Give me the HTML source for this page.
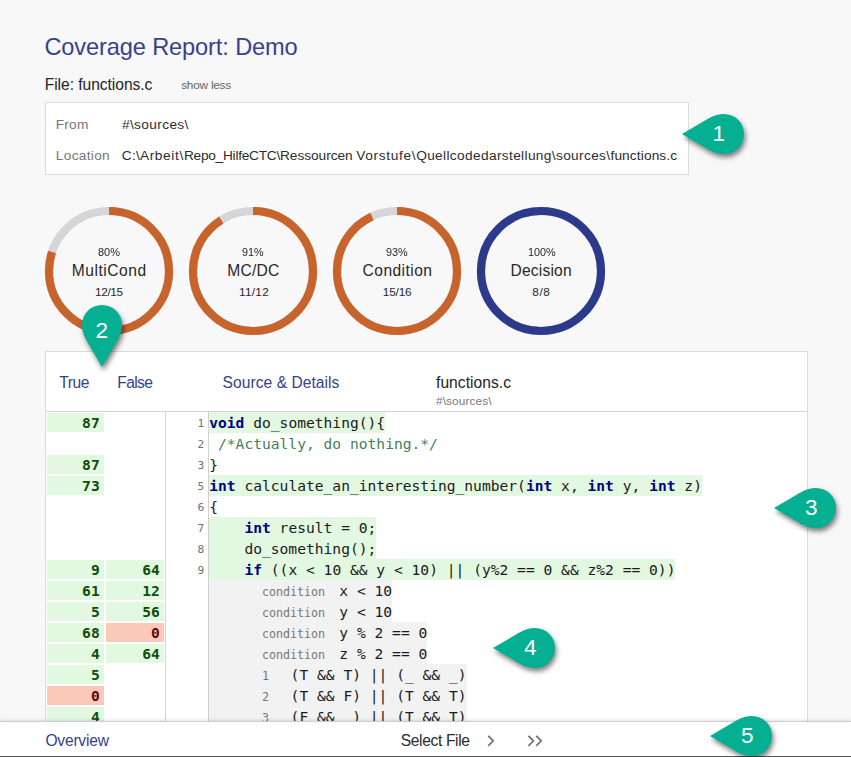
<!DOCTYPE html>
<html><head><meta charset="utf-8"><title>Coverage Report: Demo</title>
<style>
html,body{margin:0;padding:0;}
body{width:851px;height:757px;overflow:hidden;background:#f8f8f8;position:relative;font-family:"Liberation Sans", sans-serif;color:#111;}
.a{position:absolute;white-space:pre;line-height:1;}
.s{font-family:"Liberation Sans", sans-serif;}
.m{font-family:"DejaVu Sans Mono", "Liberation Mono", monospace;}
.box{position:absolute;left:45px;top:102px;width:642px;height:71px;background:#fff;border:1px solid #dcdcdc;}
.tbl{position:absolute;left:45px;top:351px;width:761px;height:420px;background:#fff;border:1px solid #dcdcdc;}
.hl{position:absolute;background:#e3f8e1;}
.gr{position:absolute;background:#f2f2f2;}
.cell{position:absolute;height:19px;}
.g{background:#e3f8e1;}
.r{background:#fcc9b9;}
.kw{font-weight:bold;color:#000080;}
.cm{color:#3f7f5f;}
.footer{position:absolute;left:0;top:721px;width:851px;height:35px;background:#fff;border-top:1px solid #cdcdcd;box-shadow:0 -1px 3px rgba(0,0,0,0.12);}
.bottom{position:absolute;left:0;top:756px;width:851px;height:1px;background:#555;}
</style></head>
<body>
<div class="a s" style="left:44.40px;top:36.20px;font-size:23.6px;color:#35428d;letter-spacing:-0.120px;">Coverage Report: Demo</div>
<div class="a s" style="left:44.70px;top:76.70px;font-size:15.6px;color:#242424;letter-spacing:-0.040px;">File: functions.c</div>
<div class="a s" style="left:181.20px;top:80.10px;font-size:11.8px;color:#666;letter-spacing:-0.225px;">show less</div>
<div class="box"></div>
<div class="a s" style="left:55.80px;top:118.35px;font-size:13.7px;color:#777;letter-spacing:0.190px;">From</div>
<div class="a s" style="left:121.90px;top:118.35px;font-size:13.7px;color:#2c2c2c;letter-spacing:0.373px;">#\sources\</div>
<div class="a s" style="left:55.80px;top:148.55px;font-size:13.7px;color:#777;letter-spacing:0.309px;">Location</div>
<div class="a s" style="left:121.80px;top:148.55px;font-size:13.7px;color:#2c2c2c"><span style="letter-spacing:0.203px">C:\</span><span style="letter-spacing:0.634px">Arbeit\</span><span style="letter-spacing:-0.253px">Repo_HilfeCTC\</span><span style="letter-spacing:-0.049px">Ressourcen </span><span style="letter-spacing:0.642px">Vorstufe\</span><span style="letter-spacing:0.353px">Quellcodedarstellung\</span><span style="letter-spacing:0.346px">sources\</span><span style="letter-spacing:0.121px">functions.c</span></div>
<svg class="a" style="left:39px;top:201px" width="140" height="140" viewBox="-70 -70 140 140"><circle r="60.0" fill="none" stroke="#d6d6d6" stroke-width="8.2"/><circle r="60.0" fill="none" stroke="#c8632b" stroke-width="8.2" stroke-dasharray="301.59 376.99" transform="rotate(-90)"/></svg>
<svg class="a" style="left:183px;top:201px" width="140" height="140" viewBox="-70 -70 140 140"><circle r="60.0" fill="none" stroke="#d6d6d6" stroke-width="8.2"/><circle r="60.0" fill="none" stroke="#c8632b" stroke-width="8.2" stroke-dasharray="343.06 376.99" transform="rotate(-90)"/></svg>
<svg class="a" style="left:327px;top:201px" width="140" height="140" viewBox="-70 -70 140 140"><circle r="60.0" fill="none" stroke="#d6d6d6" stroke-width="8.2"/><circle r="60.0" fill="none" stroke="#c8632b" stroke-width="8.2" stroke-dasharray="350.60 376.99" transform="rotate(-90)"/></svg>
<svg class="a" style="left:471px;top:201px" width="140" height="140" viewBox="-70 -70 140 140"><circle r="60.0" fill="none" stroke="#d6d6d6" stroke-width="8.2"/><circle r="60.0" fill="none" stroke="#2c3a8c" stroke-width="8.2" stroke-dasharray="376.99 376.99" transform="rotate(-90)"/></svg>
<div class="a s" style="left:97.70px;top:247.20px;font-size:11.8px;color:#282828;transform:scaleX(0.9286);transform-origin:0 0;">80%</div>
<div class="a s" style="left:71.70px;top:262.90px;font-size:15.6px;color:#282828;letter-spacing:0.521px;">MultiCond</div>
<div class="a s" style="left:94.90px;top:287.20px;font-size:11.8px;color:#282828;letter-spacing:-0.315px;">12/15</div>
<div class="a s" style="left:242.30px;top:247.20px;font-size:11.8px;color:#282828;transform:scaleX(0.9162);transform-origin:0 0;">91%</div>
<div class="a s" style="left:227.20px;top:262.90px;font-size:15.6px;color:#282828;letter-spacing:0.239px;">MC/DC</div>
<div class="a s" style="left:239.00px;top:287.20px;font-size:11.8px;color:#282828;letter-spacing:0.279px;">11/12</div>
<div class="a s" style="left:386.00px;top:247.20px;font-size:11.8px;color:#282828;transform:scaleX(0.9203);transform-origin:0 0;">93%</div>
<div class="a s" style="left:362.60px;top:262.90px;font-size:15.6px;color:#282828;letter-spacing:0.436px;">Condition</div>
<div class="a s" style="left:382.80px;top:287.20px;font-size:11.8px;color:#282828;letter-spacing:-0.190px;">15/16</div>
<div class="a s" style="left:527.60px;top:247.20px;font-size:11.8px;color:#282828;transform:scaleX(0.9191);transform-origin:0 0;">100%</div>
<div class="a s" style="left:510.60px;top:262.90px;font-size:15.6px;color:#282828;letter-spacing:0.167px;">Decision</div>
<div class="a s" style="left:532.30px;top:287.20px;font-size:11.8px;color:#282828;letter-spacing:0.531px;">8/8</div>
<div class="tbl"></div>
<div class="a s" style="left:59.20px;top:375.10px;font-size:15.6px;color:#35428d;letter-spacing:-0.437px;">True</div>
<div class="a s" style="left:117.30px;top:375.10px;font-size:15.6px;color:#35428d;letter-spacing:-0.615px;">False</div>
<div class="a s" style="left:222.60px;top:375.10px;font-size:15.6px;color:#35428d;letter-spacing:0.044px;">Source &amp; Details</div>
<div class="a s" style="left:436.00px;top:375.10px;font-size:15.6px;color:#242424;letter-spacing:0.045px;">functions.c</div>
<div class="a s" style="left:436.00px;top:396.10px;font-size:11.8px;color:#777;letter-spacing:0.117px;">#\sources\</div>
<div style="position:absolute;left:46px;top:411px;width:761px;height:1px;background:#d4d4d4"></div>
<div style="position:absolute;left:165px;top:412px;width:1px;height:320px;background:#d4d4d4"></div>
<div style="position:absolute;left:208px;top:412px;width:1px;height:320px;background:#d0d0d0"></div>
<div class="cell g" style="left:47px;top:413px;width:57px"></div>
<div class="a m" style="left:82.11px;top:416.20px;font-size:14.6px;color:#0e4d08;letter-spacing:0.011px;font-weight:bold;">87</div>
<div class="a m" style="left:197.56px;top:418.20px;font-size:11.2px;color:#707070;letter-spacing:0.000px;">1</div>
<div class="hl" style="left:209px;top:412px;width:175.9px;height:21px"></div>
<div class="a m" style="left:209.20px;top:416.20px;font-size:14.6px;color:#1a1a1a;letter-spacing:0.011px;"><span class="kw">void</span> do_something(){</div>
<div class="a m" style="left:197.56px;top:439.20px;font-size:11.2px;color:#707070;letter-spacing:0.000px;">2</div>
<div class="a m" style="left:209.20px;top:437.20px;font-size:14.6px;color:#1a1a1a;letter-spacing:0.011px;"><span class="cm"> /*Actually, do nothing.*/</span></div>
<div class="cell g" style="left:47px;top:455px;width:57px"></div>
<div class="a m" style="left:82.11px;top:458.20px;font-size:14.6px;color:#0e4d08;letter-spacing:0.011px;font-weight:bold;">87</div>
<div class="a m" style="left:197.56px;top:460.20px;font-size:11.2px;color:#707070;letter-spacing:0.000px;">3</div>
<div class="a m" style="left:209.20px;top:458.20px;font-size:14.6px;color:#1a1a1a;letter-spacing:0.011px;">}</div>
<div class="cell g" style="left:47px;top:476px;width:57px"></div>
<div class="a m" style="left:82.11px;top:479.20px;font-size:14.6px;color:#0e4d08;letter-spacing:0.011px;font-weight:bold;">73</div>
<div class="a m" style="left:197.56px;top:481.20px;font-size:11.2px;color:#707070;letter-spacing:0.000px;">5</div>
<div class="hl" style="left:209px;top:475px;width:492.6px;height:21px"></div>
<div class="a m" style="left:209.20px;top:479.20px;font-size:14.6px;color:#1a1a1a;letter-spacing:0.011px;"><span class="kw">int</span> calculate_an_interesting_number(<span class="kw">int</span> x, <span class="kw">int</span> y, <span class="kw">int</span> z)</div>
<div class="a m" style="left:197.56px;top:502.20px;font-size:11.2px;color:#707070;letter-spacing:0.000px;">6</div>
<div class="a m" style="left:209.20px;top:500.20px;font-size:14.6px;color:#1a1a1a;letter-spacing:0.011px;">{</div>
<div class="a m" style="left:197.56px;top:523.20px;font-size:11.2px;color:#707070;letter-spacing:0.000px;">7</div>
<div class="hl" style="left:209px;top:517px;width:167.1px;height:21px"></div>
<div class="a m" style="left:209.20px;top:521.20px;font-size:14.6px;color:#1a1a1a;letter-spacing:0.011px;">    <span class="kw">int</span> result = 0;</div>
<div class="a m" style="left:197.56px;top:544.20px;font-size:11.2px;color:#707070;letter-spacing:0.000px;">8</div>
<div class="hl" style="left:209px;top:538px;width:167.1px;height:21px"></div>
<div class="a m" style="left:209.20px;top:542.20px;font-size:14.6px;color:#1a1a1a;letter-spacing:0.011px;">    do_something();</div>
<div class="cell g" style="left:47px;top:560px;width:57px"></div>
<div class="a m" style="left:90.90px;top:563.20px;font-size:14.6px;color:#0e4d08;letter-spacing:0.011px;font-weight:bold;">9</div>
<div class="cell g" style="left:106px;top:560px;width:58px"></div>
<div class="a m" style="left:142.31px;top:563.20px;font-size:14.6px;color:#0e4d08;letter-spacing:0.011px;font-weight:bold;">64</div>
<div class="a m" style="left:197.56px;top:565.20px;font-size:11.2px;color:#707070;letter-spacing:0.000px;">9</div>
<div class="hl" style="left:209px;top:559px;width:466.2px;height:21px"></div>
<div class="a m" style="left:209.20px;top:563.20px;font-size:14.6px;color:#1a1a1a;letter-spacing:0.011px;">    <span class="kw">if</span> ((x &lt; 10 &amp;&amp; y &lt; 10) || (y%2 == 0 &amp;&amp; z%2 == 0))</div>
<div class="cell g" style="left:47px;top:581px;width:57px"></div>
<div class="a m" style="left:82.11px;top:584.20px;font-size:14.6px;color:#0e4d08;letter-spacing:0.011px;font-weight:bold;">61</div>
<div class="cell g" style="left:106px;top:581px;width:58px"></div>
<div class="a m" style="left:142.31px;top:584.20px;font-size:14.6px;color:#0e4d08;letter-spacing:0.011px;font-weight:bold;">12</div>
<div class="gr" style="left:209px;top:580px;width:183.1px;height:21px"></div>
<div class="a m" style="left:262.00px;top:587.15px;font-size:11.7px;color:#777;letter-spacing:-0.036px;">condition</div>
<div class="a m" style="left:339.30px;top:584.20px;font-size:14.6px;color:#1a1a1a;letter-spacing:0.011px;">x &lt; 10</div>
<div class="cell g" style="left:47px;top:602px;width:57px"></div>
<div class="a m" style="left:90.90px;top:605.20px;font-size:14.6px;color:#0e4d08;letter-spacing:0.011px;font-weight:bold;">5</div>
<div class="cell g" style="left:106px;top:602px;width:58px"></div>
<div class="a m" style="left:142.31px;top:605.20px;font-size:14.6px;color:#0e4d08;letter-spacing:0.011px;font-weight:bold;">56</div>
<div class="gr" style="left:209px;top:601px;width:183.1px;height:21px"></div>
<div class="a m" style="left:262.00px;top:608.15px;font-size:11.7px;color:#777;letter-spacing:-0.036px;">condition</div>
<div class="a m" style="left:339.30px;top:605.20px;font-size:14.6px;color:#1a1a1a;letter-spacing:0.011px;">y &lt; 10</div>
<div class="cell g" style="left:47px;top:623px;width:57px"></div>
<div class="a m" style="left:82.11px;top:626.20px;font-size:14.6px;color:#0e4d08;letter-spacing:0.011px;font-weight:bold;">68</div>
<div class="cell r" style="left:106px;top:623px;width:58px"></div>
<div class="a m" style="left:151.10px;top:626.20px;font-size:14.6px;color:#5e0606;letter-spacing:0.011px;font-weight:bold;">0</div>
<div class="gr" style="left:209px;top:622px;width:218.3px;height:21px"></div>
<div class="a m" style="left:262.00px;top:629.15px;font-size:11.7px;color:#777;letter-spacing:-0.036px;">condition</div>
<div class="a m" style="left:339.30px;top:626.20px;font-size:14.6px;color:#1a1a1a;letter-spacing:0.011px;">y % 2 == 0</div>
<div class="cell g" style="left:47px;top:644px;width:57px"></div>
<div class="a m" style="left:90.90px;top:647.20px;font-size:14.6px;color:#0e4d08;letter-spacing:0.011px;font-weight:bold;">4</div>
<div class="cell g" style="left:106px;top:644px;width:58px"></div>
<div class="a m" style="left:142.31px;top:647.20px;font-size:14.6px;color:#0e4d08;letter-spacing:0.011px;font-weight:bold;">64</div>
<div class="gr" style="left:209px;top:643px;width:218.3px;height:21px"></div>
<div class="a m" style="left:262.00px;top:650.15px;font-size:11.7px;color:#777;letter-spacing:-0.036px;">condition</div>
<div class="a m" style="left:339.30px;top:647.20px;font-size:14.6px;color:#1a1a1a;letter-spacing:0.011px;">z % 2 == 0</div>
<div class="cell g" style="left:47px;top:665px;width:57px"></div>
<div class="a m" style="left:90.90px;top:668.20px;font-size:14.6px;color:#0e4d08;letter-spacing:0.011px;font-weight:bold;">5</div>
<div class="gr" style="left:209px;top:664px;width:257.5px;height:21px"></div>
<div class="a m" style="left:262.00px;top:671.15px;font-size:11.7px;color:#777;letter-spacing:-0.036px;">1</div>
<div class="a m" style="left:290.60px;top:668.20px;font-size:14.6px;color:#1a1a1a;letter-spacing:0.011px;">(T &amp;&amp; T) || (_ &amp;&amp; _)</div>
<div class="cell r" style="left:47px;top:686px;width:57px"></div>
<div class="a m" style="left:90.90px;top:689.20px;font-size:14.6px;color:#5e0606;letter-spacing:0.011px;font-weight:bold;">0</div>
<div class="gr" style="left:209px;top:685px;width:257.5px;height:21px"></div>
<div class="a m" style="left:262.00px;top:692.15px;font-size:11.7px;color:#777;letter-spacing:-0.036px;">2</div>
<div class="a m" style="left:290.60px;top:689.20px;font-size:14.6px;color:#1a1a1a;letter-spacing:0.011px;">(T &amp;&amp; F) || (T &amp;&amp; T)</div>
<div class="cell g" style="left:47px;top:707px;width:57px"></div>
<div class="a m" style="left:90.90px;top:710.20px;font-size:14.6px;color:#0e4d08;letter-spacing:0.011px;font-weight:bold;">4</div>
<div class="gr" style="left:209px;top:706px;width:257.5px;height:21px"></div>
<div class="a m" style="left:262.00px;top:713.15px;font-size:11.7px;color:#777;letter-spacing:-0.036px;">3</div>
<div class="a m" style="left:290.60px;top:710.20px;font-size:14.6px;color:#1a1a1a;letter-spacing:0.011px;">(F &amp;&amp; _) || (T &amp;&amp; T)</div>
<div class="footer"></div>
<div class="bottom"></div>
<div class="a s" style="left:45.40px;top:733.00px;font-size:15.6px;color:#35428d;letter-spacing:-0.204px;">Overview</div>
<div class="a s" style="left:400.70px;top:733.00px;font-size:15.6px;color:#2c2c2c;letter-spacing:-0.353px;">Select File</div>
<svg class="a" style="left:480px;top:730px" width="70" height="22" viewBox="480 730 70 22"><g fill="none" stroke="#707070" stroke-width="1.7"><path d="M488.2 735.8 L493.2 740.8 L488.2 745.8"/><path d="M528.4 735.8 L533.4 740.8 L528.4 745.8"/><path d="M536.2 735.8 L541.2 740.8 L536.2 745.8"/></g></svg>
<svg width="0" height="0" style="position:absolute"><defs><filter id="sh" x="-30%" y="-30%" width="170%" height="170%" color-interpolation-filters="sRGB"><feDropShadow dx="1.6" dy="3.4" stdDeviation="2.4" flood-color="#000" flood-opacity="0.5"/></filter></defs></svg>
<svg class="a" style="left:664px;top:74px;overflow:visible" width="120" height="120" viewBox="-60 -60 120 120"><g filter="url(#sh)"><path d="M-42 0 L-16 -15.2 C-10 -18.7 -4.5 -20 0 -20 A20 20 0 0 1 0 20 C-4.5 20 -10 18.7 -16 15.2 Z" fill="#05af91" transform="rotate(0)"/></g></svg>
<div class="a s" style="left:712.50px;top:123.11px;font-size:22.6px;color:#fff;">1</div>
<svg class="a" style="left:42px;top:265px;overflow:visible" width="120" height="120" viewBox="-60 -60 120 120"><g filter="url(#sh)"><path d="M-42 0 L-16 -15.2 C-10 -18.7 -4.5 -20 0 -20 A20 20 0 0 1 0 20 C-4.5 20 -10 18.7 -16 15.2 Z" fill="#05af91" transform="rotate(-90)"/></g></svg>
<div class="a s" style="left:95.50px;top:319.91px;font-size:22.6px;color:#fff;">2</div>
<svg class="a" style="left:756px;top:448px;overflow:visible" width="120" height="120" viewBox="-60 -60 120 120"><g filter="url(#sh)"><path d="M-42 0 L-16 -15.2 C-10 -18.7 -4.5 -20 0 -20 A20 20 0 0 1 0 20 C-4.5 20 -10 18.7 -16 15.2 Z" fill="#05af91" transform="rotate(0)"/></g></svg>
<div class="a s" style="left:805.00px;top:497.11px;font-size:22.6px;color:#fff;">3</div>
<svg class="a" style="left:475px;top:588px;overflow:visible" width="120" height="120" viewBox="-60 -60 120 120"><g filter="url(#sh)"><path d="M-42 0 L-16 -15.2 C-10 -18.7 -4.5 -20 0 -20 A20 20 0 0 1 0 20 C-4.5 20 -10 18.7 -16 15.2 Z" fill="#05af91" transform="rotate(0)"/></g></svg>
<div class="a s" style="left:524.00px;top:637.11px;font-size:22.6px;color:#fff;">4</div>
<svg class="a" style="left:692px;top:676px;overflow:visible" width="120" height="120" viewBox="-60 -60 120 120"><g filter="url(#sh)"><path d="M-42 0 L-16 -15.2 C-10 -18.7 -4.5 -20 0 -20 A20 20 0 0 1 0 20 C-4.5 20 -10 18.7 -16 15.2 Z" fill="#05af91" transform="rotate(0)"/></g></svg>
<div class="a s" style="left:741.00px;top:725.11px;font-size:22.6px;color:#fff;">5</div>
</body></html>
